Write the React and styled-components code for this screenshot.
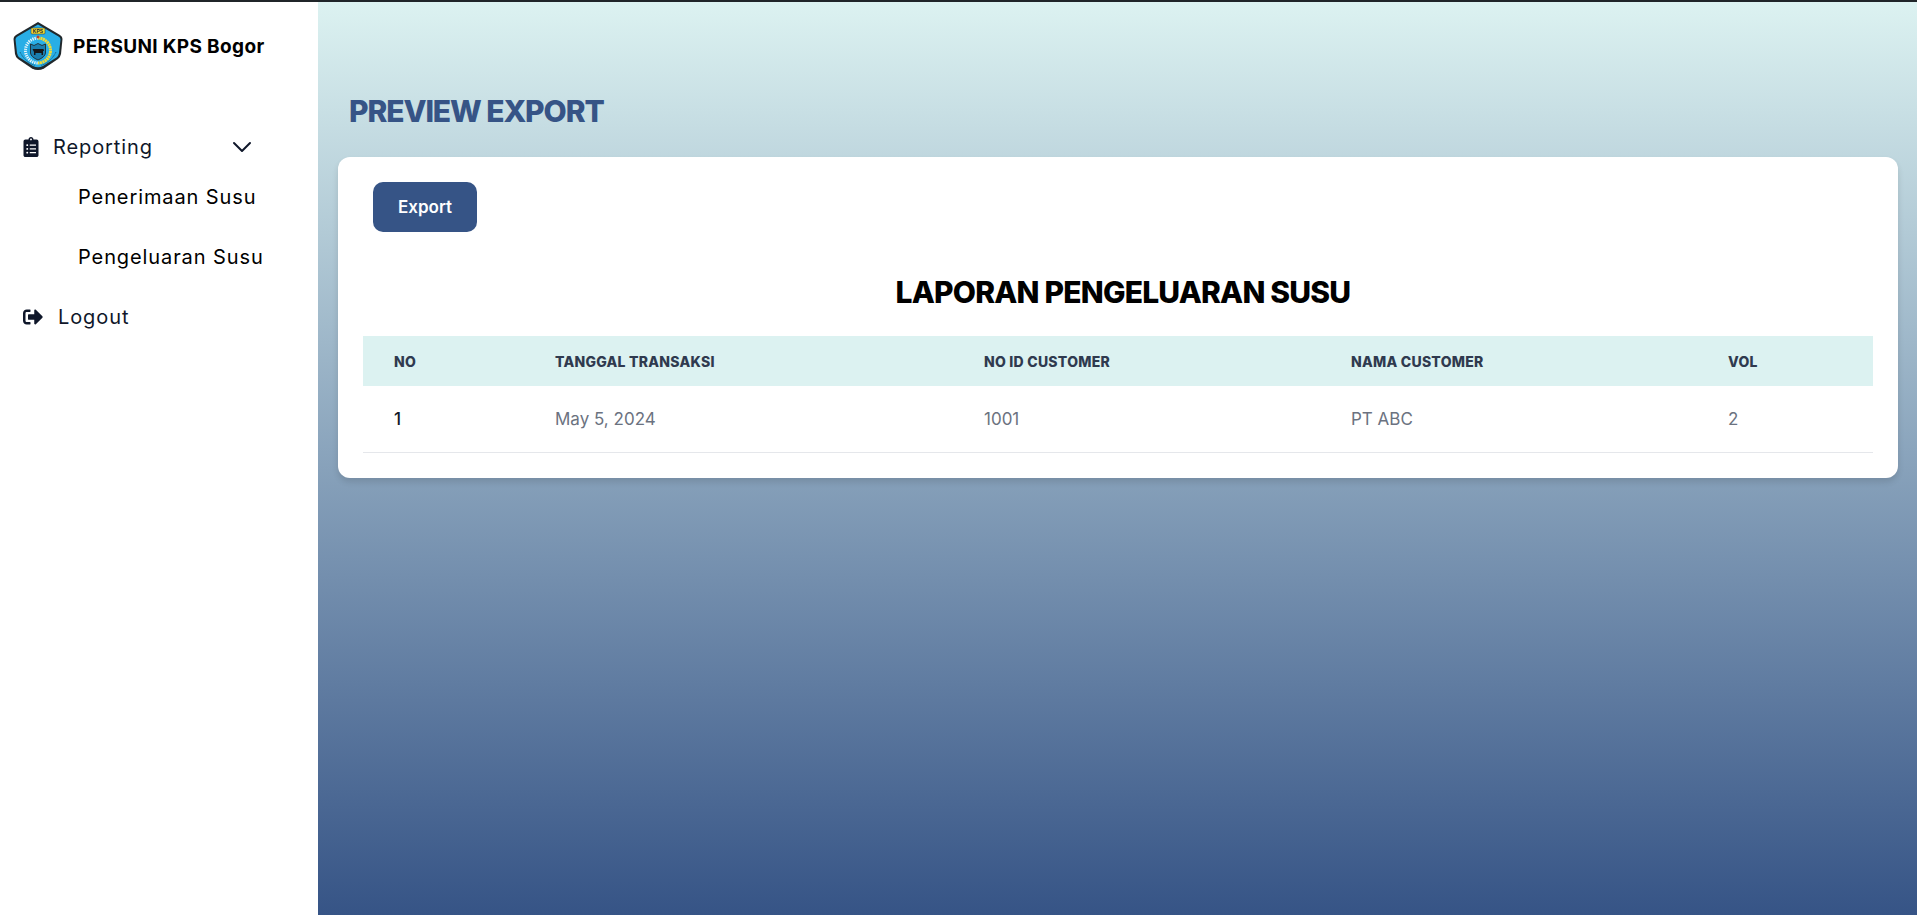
import React from "react";
import styled, { createGlobalStyle } from "styled-components";
import { FaClipboardList, FaSignOutAlt } from "react-icons/fa";
import { FiChevronDown } from "react-icons/fi";

const GlobalStyle = createGlobalStyle`
  * { box-sizing: border-box; }
  html, body { margin: 0; padding: 0; height: 100%; overflow: hidden; }
  body { font-family: "Inter", "Liberation Sans", sans-serif; background: #fff; }
`;

const columns = [
  { label: "NO", width: 161 },
  { label: "TANGGAL TRANSAKSI", width: 429 },
  { label: "NO ID CUSTOMER", width: 367 },
  { label: "NAMA CUSTOMER", width: 377 },
  { label: "VOL", width: 176 },
];

const rows = [{ no: "1", tanggal: "May 5, 2024", id: "1001", nama: "PT ABC", vol: "2" }];

// logo badge, drawn by hand since there is no image file
function Logo() {
  return (
    <LogoSvg viewBox="0 0 50 49" aria-hidden="true">
      <path d="M25 0 L47 13 Q49.5 14.5 49.5 17 L48 32 Q47.5 35 45 37 L31 46.5 Q25 49.5 19 46.5 L5 37 Q2.5 35 2 32 L0.5 17 Q0.5 14.5 3 13 Z" fill="#20282c" />
      <path d="M25 2.5 L45.5 14.5 Q47.5 15.5 47.5 17.5 L46 31 Q45.5 34 43.5 35.5 L30 44 Q25 46.5 20 44 L6.5 35.5 Q4.5 34 4 31 L2.5 17.5 Q2.5 15.5 4.5 14.5 Z" fill="#29aee6" />
      <rect x="18" y="6" width="14" height="6" rx="1" fill="#f4dc35" stroke="#20282c" strokeWidth="0.5" />
      <text x="25" y="10.8" textAnchor="middle" fontSize="5" fontWeight="700" fontFamily="Liberation Sans, sans-serif" fill="#20282c">KPS</text>
      <path d="M25 16 A12.5 12.5 0 0 1 25 41" fill="none" stroke="#f4dc35" strokeWidth="3" strokeDasharray="2 0.5" />
      <path d="M25 16 A12.5 12.5 0 0 0 25 41" fill="none" stroke="#eaf6fa" strokeWidth="3" strokeDasharray="1.3 0.9" />
      <path d="M17.5 22 L21 23.5 L25 21.5 L29 23.5 L32.5 22 L32.5 31 Q32 35 25 38 Q18 35 17.5 31 Z" fill="#1a7eaf" stroke="#20282c" strokeWidth="0.9" />
      <path d="M19.5 27 H30.5 L31 29 H30 V33 H28.5 V31 H22.5 V33 H21 V30 Z" fill="#14171a" />
      <circle cx="25" cy="15" r="1.5" fill="#b8402f" />
      <path d="M7 30 Q12 40 22 43.5 M43 30 Q38 40 28 43.5" fill="none" stroke="#14506e" strokeWidth="0.9" strokeDasharray="1 0.6" />
    </LogoSvg>
  );
}

export default function App() {
  return (
    <>
      <GlobalStyle />
      <Page>
        <Sidebar>
          <Brand>
            <Logo />
            <BrandName>PERSUNI KPS Bogor</BrandName>
          </Brand>
          <Menu>
            <MenuHead>
              <FaClipboardList size={20} />
              <MenuLabel>Reporting</MenuLabel>
              <Chevron><FiChevronDown size={32} strokeWidth={1.5} /></Chevron>
            </MenuHead>
            <SubItem>Penerimaan Susu</SubItem>
            <SubItem>Pengeluaran Susu</SubItem>
            <LogoutItem>
              <FaSignOutAlt size={20} />
              <MenuLabel>Logout</MenuLabel>
            </LogoutItem>
          </Menu>
        </Sidebar>
        <Main>
          <PageTitle>PREVIEW EXPORT</PageTitle>
          <Card>
            <ExportButton>Export</ExportButton>
            <ReportTitle>LAPORAN PENGELUARAN SUSU</ReportTitle>
            <Table>
              <thead>
                <tr>
                  {columns.map((c) => (
                    <HeadCell key={c.label} $width={c.width}>{c.label}</HeadCell>
                  ))}
                </tr>
              </thead>
              <tbody>
                {rows.map((r) => (
                  <tr key={r.no}>
                    <NoCell>{r.no}</NoCell>
                    <Cell>{r.tanggal}</Cell>
                    <Cell>{r.id}</Cell>
                    <Cell>{r.nama}</Cell>
                    <Cell>{r.vol}</Cell>
                  </tr>
                ))}
              </tbody>
            </Table>
          </Card>
        </Main>
      </Page>
    </>
  );
}

const Page = styled.div`
  display: flex;
  height: 915px;
  border-top: 2px solid #202529;
`;

const Sidebar = styled.aside`
  width: 318px;
  flex: none;
  background: #fff;
`;

const Brand = styled.div`
  display: flex;
  align-items: center;
  gap: 10px;
  padding: 20px 0 0 13px;
`;

const LogoSvg = styled.svg`
  width: 50px;
  height: 49px;
  flex: none;
`;

const BrandName = styled.span`
  font-size: 19px;
  font-weight: 700;
  color: #000;
  letter-spacing: 0.35px;
`;

const Menu = styled.nav`
  display: flex;
  flex-direction: column;
  padding: 64px 0 0 21px;
  color: #0f172a;
`;

const MenuHead = styled.div`
  display: flex;
  align-items: center;
  height: 24px;
  gap: 12px;
`;

const MenuLabel = styled.span`
  font-size: 20px;
  font-weight: 400;
  letter-spacing: 0.9px;
`;

const Chevron = styled.span`
  display: flex;
  margin-left: 61px;
`;

const SubItem = styled.div`
  font-size: 20px;
  color: #000;
  letter-spacing: 0.9px;
  margin: 26px 0 0 57px;
  line-height: 24px;
  & + & { margin-top: 36px; }
`;

const LogoutItem = styled(MenuHead)`
  margin: 36px 0 0 2px;
  gap: 15px;
`;

const Main = styled.main`
  flex: 1;
  padding: 89px 19px 0 20px;
  background: linear-gradient(#dcf2f1, #365486);
`;

const PageTitle = styled.h1`
  margin: 0 0 0 11px;
  font-size: 30px;
  line-height: 40px;
  font-weight: 800;
  letter-spacing: -1.1px;
  color: #365486;
`;

const Card = styled.section`
  margin-top: 26px;
  height: 321px;
  padding: 25px 25px 0;
  background: #fff;
  border-radius: 12px;
  box-shadow: 0 4px 6px rgba(0, 0, 0, 0.12);
`;

const ExportButton = styled.button`
  display: block;
  width: 104px;
  height: 50px;
  margin-left: 10px;
  border: none;
  border-radius: 10px;
  background: #365486;
  color: #fff;
  font: 600 17px "Inter", "Liberation Sans", sans-serif;
`;

const ReportTitle = styled.h2`
  margin: 38px 0 0;
  padding-left: 10px;
  text-align: center;
  font-size: 30px;
  line-height: 44px;
  font-weight: 800;
  letter-spacing: -0.8px;
  color: #000;
`;

const Table = styled.table`
  width: 1510px;
  margin-top: 22px;
  border-collapse: collapse;
  table-layout: fixed;
`;

const HeadCell = styled.th`
  width: ${(p) => p.$width}px;
  height: 50px;
  padding: 0 0 0 31px;
  text-align: left;
  background: #dcf2f1;
  color: #2f3a4f;
  font-size: 14px;
  font-weight: 800;
  letter-spacing: 0.25px;
`;

const Cell = styled.td`
  height: 66px;
  padding: 0 0 0 31px;
  border-bottom: 1px solid #e5e7eb;
  color: #6b7280;
  font-size: 17px;
`;

const NoCell = styled(Cell)`
  color: #111827;
  font-weight: 500;
`;
